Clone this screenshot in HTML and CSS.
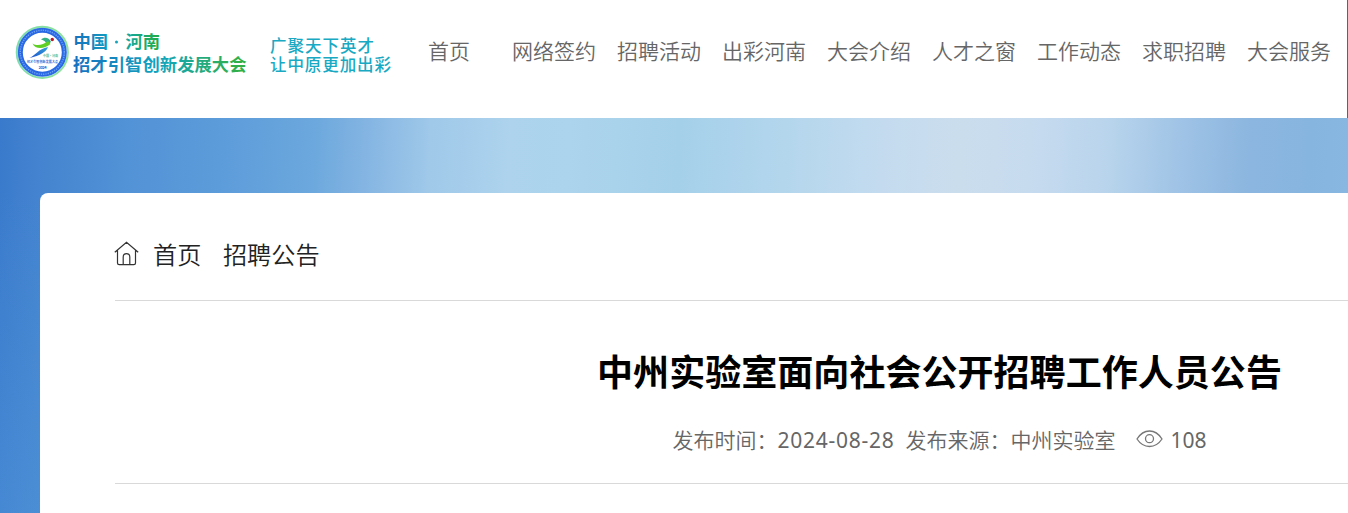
FILE: index.html
```
<!DOCTYPE html>
<html lang="zh-CN">

<head>
  <meta charset="UTF-8">
  <meta name="viewport" content="width=device-width, initial-scale=1.0">
  <title>中州实验室面向社会公开招聘工作人员公告</title>
  <link rel="stylesheet" href="styles.css">
</head>

<body>
  <header class="header">
    <a class="logo" href="#">
      <svg width="380" height="60" viewBox="0 0 380 60">
        <defs>
          <linearGradient id="name" gradientUnits="userSpaceOnUse" x1="58" y1="0" x2="232" y2="0">
            <stop offset="0" stop-color="#1670c0" />
            <stop offset="0.5" stop-color="#12a5bd" />
            <stop offset="1" stop-color="#35b03c" />
          </linearGradient>
          <linearGradient id="place" gradientUnits="userSpaceOnUse" x1="58" y1="0" x2="145" y2="0">
            <stop offset="0" stop-color="#1670c0" />
            <stop offset="0.5" stop-color="#12a5bd" />
            <stop offset="1" stop-color="#22ac42" />
          </linearGradient>
          <linearGradient id="ring" x1="0" y1="0" x2="1" y2="0">
            <stop offset="0" stop-color="#7fdcae" />
            <stop offset="1" stop-color="#8fe39a" />
          </linearGradient>
          <linearGradient id="leg" x1="0" y1="1" x2="1" y2="0">
            <stop offset="0" stop-color="#1f4fd0" />
            <stop offset="1" stop-color="#2fa3d8" />
          </linearGradient>
        </defs>
        <!-- 会徽 -->
        <circle cx="27.3" cy="29.3" r="25.6" fill="#fff" stroke="url(#ring)" stroke-width="2" />
        <circle cx="27.3" cy="29.3" r="22" fill="#fff" stroke="#2868e4" stroke-width="5" />
        <circle cx="27.3" cy="29.3" r="22" fill="none" stroke="#6c9ff0" stroke-width="1.4" stroke-dasharray="1.3 1" />
        <path d="M26 16.500C29 14 34 14 36 19L32 22C31 19 29 17 26 16.500Z" fill="#35b184" />
        <path d="M17.500 20.500C22 23.500 28 22 33 18L35.500 21C29 26.500 20 26.500 17.500 20.500Z" fill="#5fcf25" />
        <path d="M14.500 35C21 32 23 26 33 24C32 28 25 33 14.500 35Z" fill="url(#leg)" />
        <circle cx="37.300" cy="16.500" r="1.700" fill="#b51b26" />
        <text class="badge-place" x="28" y="33.500">中国·河南</text>
        <text class="badge-name" x="12" y="39.500" textLength="31">招才引智创新发展大会</text>
        <text class="badge-year" x="23.500" y="46" textLength="8">2024</text>
        <!-- 名称与口号 -->
        <text class="name" x="58.500" y="24.500" fill="url(#place)" textLength="34.500">中国</text>
        <circle cx="101.500" cy="19" r="1.500" fill="#12a5bd" />
        <text class="name" x="110.500" y="24.500" fill="url(#place)" textLength="34.500">河南</text>
        <text class="name" x="58" y="47.500" fill="url(#name)" textLength="173.500">招才引智创新发展大会</text>
        <text class="slogan" x="255" y="28.500" textLength="104">广聚天下英才</text>
        <text class="slogan" x="255" y="48" textLength="121">让中原更加出彩</text>
      </svg>
    </a>
    <nav class="nav">
      <a href="#">首页</a>
      <a href="#">网络签约</a>
      <a href="#">招聘活动</a>
      <a href="#">出彩河南</a>
      <a href="#">大会介绍</a>
      <a href="#">人才之窗</a>
      <a href="#">工作动态</a>
      <a href="#">求职招聘</a>
      <a href="#">大会服务</a>
    </nav>
  </header>

  <main class="main">
    <div class="content">
      <div class="crumb">
        <svg class="icon-home" width="25" height="25" viewBox="0 0 25 25">
          <path d="M.8 11.200L12.500 1.200L24.200 11.200M3.500 9.500V22Q3.500 23.700 5.200 23.700H19.800Q21.500 23.700 21.500 22V9.500M9.200 23.500V16Q9.200 12.700 12.500 12.700Q15.800 12.700 15.800 16V23.500" />
        </svg>
        <a href="#">首页</a>
        <a href="#">招聘公告</a>
      </div>
      <div class="article-head">
        <h1>中州实验室面向社会公开招聘工作人员公告</h1>
        <div class="info">
          <span>发布时间：<span class="date">2024-08-28</span></span>
          <span class="source">发布来源：中州实验室</span>
          <svg class="icon-eye" width="27" height="18" viewBox="0 0 27 18">
            <path d="M1 9Q6 1 13.500 1Q21 1 26 9Q21 16.500 13.500 16.500Q6 16.500 1 9Z" />
            <circle cx="13.500" cy="8.700" r="4" />
          </svg>
          <span class="count">108</span>
        </div>
      </div>
    </div>
  </main>
</body>

</html>
```
FILE: styles.css
```
* {
  margin: 0;
  padding: 0;
  box-sizing: border-box;
}

body {
  height: 513px;
  overflow: hidden;
  font-family: "Noto Sans", "Noto Sans CJK SC", sans-serif;
  font-weight: 350;
  background-color: #fff;
}

a {
  color: inherit;
  text-decoration: none;
}

/* 头部 */
.header {
  display: flex;
  height: 118px;
  padding-left: 15px;
  border-right: 1px solid #1b75b8;
}

.logo {
  flex: none;
  width: 413px;
  padding-top: 23px;
}

.logo svg {
  display: block;
}

.name {
  font: 700 17.3px "Noto Sans CJK SC", sans-serif;
}

.slogan {
  font: 500 16.5px "Noto Sans CJK SC", sans-serif;
  fill: #19a9c3;
}

.badge-place,
.badge-name,
.badge-year {
  font: 700 3px "Noto Sans CJK SC", sans-serif;
  fill: #2b5fd6;
}

.badge-place {
  fill: #49bd93;
}

.badge-year {
  font-size: 4px;
}

.nav {
  display: flex;
  gap: 21px;
  padding-top: 36px;
  color: #666;
  font-size: 21px;
  line-height: 30px;
  white-space: nowrap;
}

.nav a {
  min-width: 63px;
}

/* 主体 */
.main {
  height: 395px;
  padding: 75px 0 0 40px;
  overflow: hidden;
  background:
    linear-gradient(to bottom, transparent 75px, rgba(86, 158, 222, .4) 480px) 0 0 / 40px 100% no-repeat,
    linear-gradient(93deg, #3a7acc 0, #4585d0 50px, #5292d6 130px, #5f9edb 240px, #6ca8dd 315px, #83b4e2 365px, #9fc8e9 430px, #add3ed 510px, #acd4ec 570px, #a5d0ea 680px, #b0d5ec 765px, #c4dbef 885px, #cadded 960px, #c7dbef 1030px, #b8d4ec 1110px, #9cc1e5 1190px, #8cb6df 1250px, #86b5e0 1310px, #89b8e1 1370px);
}

.content {
  width: 1798px;
  height: 320px;
  padding: 0 74px 0 75px;
  border-radius: 8px 8px 0 0;
  background-color: #fff;
}

.crumb {
  display: flex;
  align-items: center;
  height: 108px;
  padding-top: 14px;
  border-bottom: 1px solid #d9d9d9;
  color: #222;
  font-size: 24.2px;
}

.crumb a {
  margin-right: 21.5px;
}

.icon-home {
  margin-left: -1px;
  margin-right: 14px;
  fill: none;
  stroke: #333;
  stroke-width: 1.2;
}

.article-head {
  height: 183px;
  padding-top: 44px;
  border-bottom: 1px solid #d9d9d9;
  text-align: center;
}

.article-head h1 {
  color: #000;
  font-size: 36.05px;
  font-weight: 700;
  line-height: 54px;
}

.info {
  display: flex;
  justify-content: center;
  align-items: center;
  margin-top: 25px;
  color: #666;
  font-size: 21px;
  line-height: 32px;
}

.date {
  font-weight: 400;
  letter-spacing: .75px;
}

.source {
  margin-left: 11px;
}

.icon-eye {
  margin: 0 8px 3px 20px;
  fill: none;
  stroke: #777;
  stroke-width: 1.3;
}

.count {
  font-weight: 400;
}
```
